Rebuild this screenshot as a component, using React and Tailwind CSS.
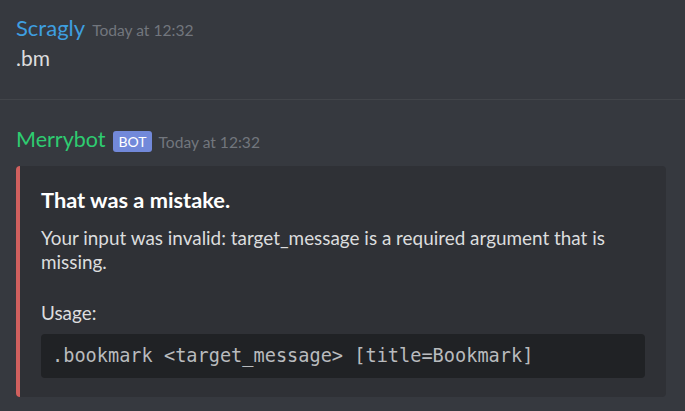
export default function App() {
  return (
    <div className="w-[685px] h-[411px] bg-[#36393f] overflow-hidden" style={{ fontFamily: 'Lato, "Noto Sans", sans-serif' }}>
      <div className="pt-[13.5px] pl-4 h-[99px]">
        <div className="flex items-baseline gap-[7px] h-[28px]">
          <span className="text-[22px] leading-[28px] text-[#3e9fe0]">Scragly</span>
          <span className="text-[15.6px] leading-[28px] text-[#72767d]">Today at 12:32</span>
        </div>
        <div className="mt-[2.5px] text-[21px] text-[#dcddde] leading-[28px]">.bm</div>
      </div>
      <div className="h-px bg-[#42454a]" />
      <div className="pl-4 pt-[25px]">
        <div className="flex items-start h-[28px]">
          <span className="text-[21.5px] leading-[28px] text-[#2ecc71]">Merrybot</span>
          <span className="ml-[8px] mt-[6px] bg-[#7289da] text-white text-[14px] rounded-[3px] px-[5px] h-[21px] leading-[21px]">BOT</span>
          <span className="ml-[7px] mt-[3px] text-[15.6px] leading-[28px] text-[#72767d]">Today at 12:32</span>
        </div>
        <div className="mt-[13px] w-[650px] h-[231px] flex rounded-[4px] bg-[#2f3136] overflow-hidden">
          <div className="w-[4px] bg-[#d0605e]" />
          <div className="flex-1 pl-[21px] pr-[21px] pt-[20px]">
            <div className="text-[21.8px] font-bold text-white leading-[28px]">That was a mistake.</div>
            <div className="mt-[12px] text-[18.9px] text-[#dcddde] leading-[24px]">
              Your input was invalid: target_message is a required argument that is missing.
            </div>
            <div className="mt-[27px] text-[18.9px] text-[#dcddde] leading-[24px]">Usage:</div>
            <div className="mt-[9px] h-[44px] flex items-center bg-[#202225] rounded-[4px] px-[11px] text-[18.6px] text-[#b9bbbe]" style={{ fontFamily: '"DejaVu Sans Mono", monospace' }}>
              .bookmark &lt;target_message&gt; [title=Bookmark]
            </div>
          </div>
        </div>
      </div>
    </div>
  );
}
